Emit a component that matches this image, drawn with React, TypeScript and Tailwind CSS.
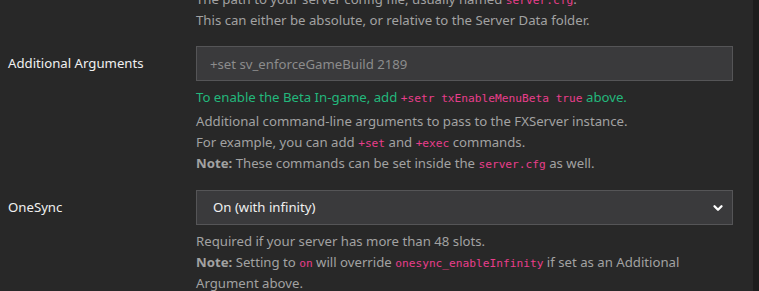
import { ChevronDown } from 'lucide-react';

function Code({ children }: { children: React.ReactNode }) {
  return (
    <code className="font-['DejaVu_Sans_Mono',monospace] text-[11.2px] leading-none text-[#e83e8c]">{children}</code>
  );
}

export default function App() {
  return (
    <div className="flex h-[291px] w-[759px] overflow-hidden bg-[#282828] font-['Noto_Sans',sans-serif] text-[13.2px] leading-[21px]">
      <div className="w-[753px]">
        <div className="-mt-[11px] grid grid-cols-[196px_537px]">
          <div />
          <div className="text-[#a2a2a2]">
            <p>
              The path to your server config file, usually named <Code>server.cfg</Code>.
            </p>
            <p>This can either be absolute, or relative to the Server Data folder.</p>
          </div>
        </div>

        <div className="mt-[15px] grid grid-cols-[196px_537px]">
          <label className="pl-2 pt-[7px] text-[#f0f0f0]">Additional Arguments</label>
          <div>
            <input
              className="h-[35px] w-full border border-[#555557] bg-[#3a3a3c] px-[13px] text-[#f0f0f0] outline-none placeholder:text-[#8c8c8c]"
              placeholder="+set sv_enforceGameBuild 2189"
            />
            <p className="mt-[6px] text-[#23b87c]">
              To enable the Beta In-game, add <Code>+setr txEnableMenuBeta true</Code> above.
            </p>
            <div className="mt-[3px] text-[#a2a2a2]">
              <p>Additional command-line arguments to pass to the FXServer instance.</p>
              <p>
                For example, you can add <Code>+set</Code> and <Code>+exec</Code> commands.
              </p>
              <p>
                <b>Note:</b> These commands can be set inside the <Code>server.cfg</Code> as well.
              </p>
            </div>
          </div>
        </div>

        <div className="mt-[16px] grid grid-cols-[196px_537px]">
          <label className="pl-2 pt-[7px] text-[#f0f0f0]">OneSync</label>
          <div>
            <div className="flex h-[35px] items-center justify-between border border-[#555557] bg-[#3a3a3c] pl-4 pr-[7px] text-[#f0f0f0]">
              <span>On (with infinity)</span>
              <ChevronDown size={14} strokeWidth={4} className="text-white" />
            </div>
            <div className="mt-[6px] text-[#a2a2a2]">
              <p>Required if your server has more than 48 slots.</p>
              <p>
                <b>Note:</b> Setting to <Code>on</Code> will override <Code>onesync_enableInfinity</Code> if set as an Additional Argument above.
              </p>
            </div>
          </div>
        </div>
      </div>
      <div className="h-full w-[6px] bg-[#1d1d1d]" />
    </div>
  );
}
